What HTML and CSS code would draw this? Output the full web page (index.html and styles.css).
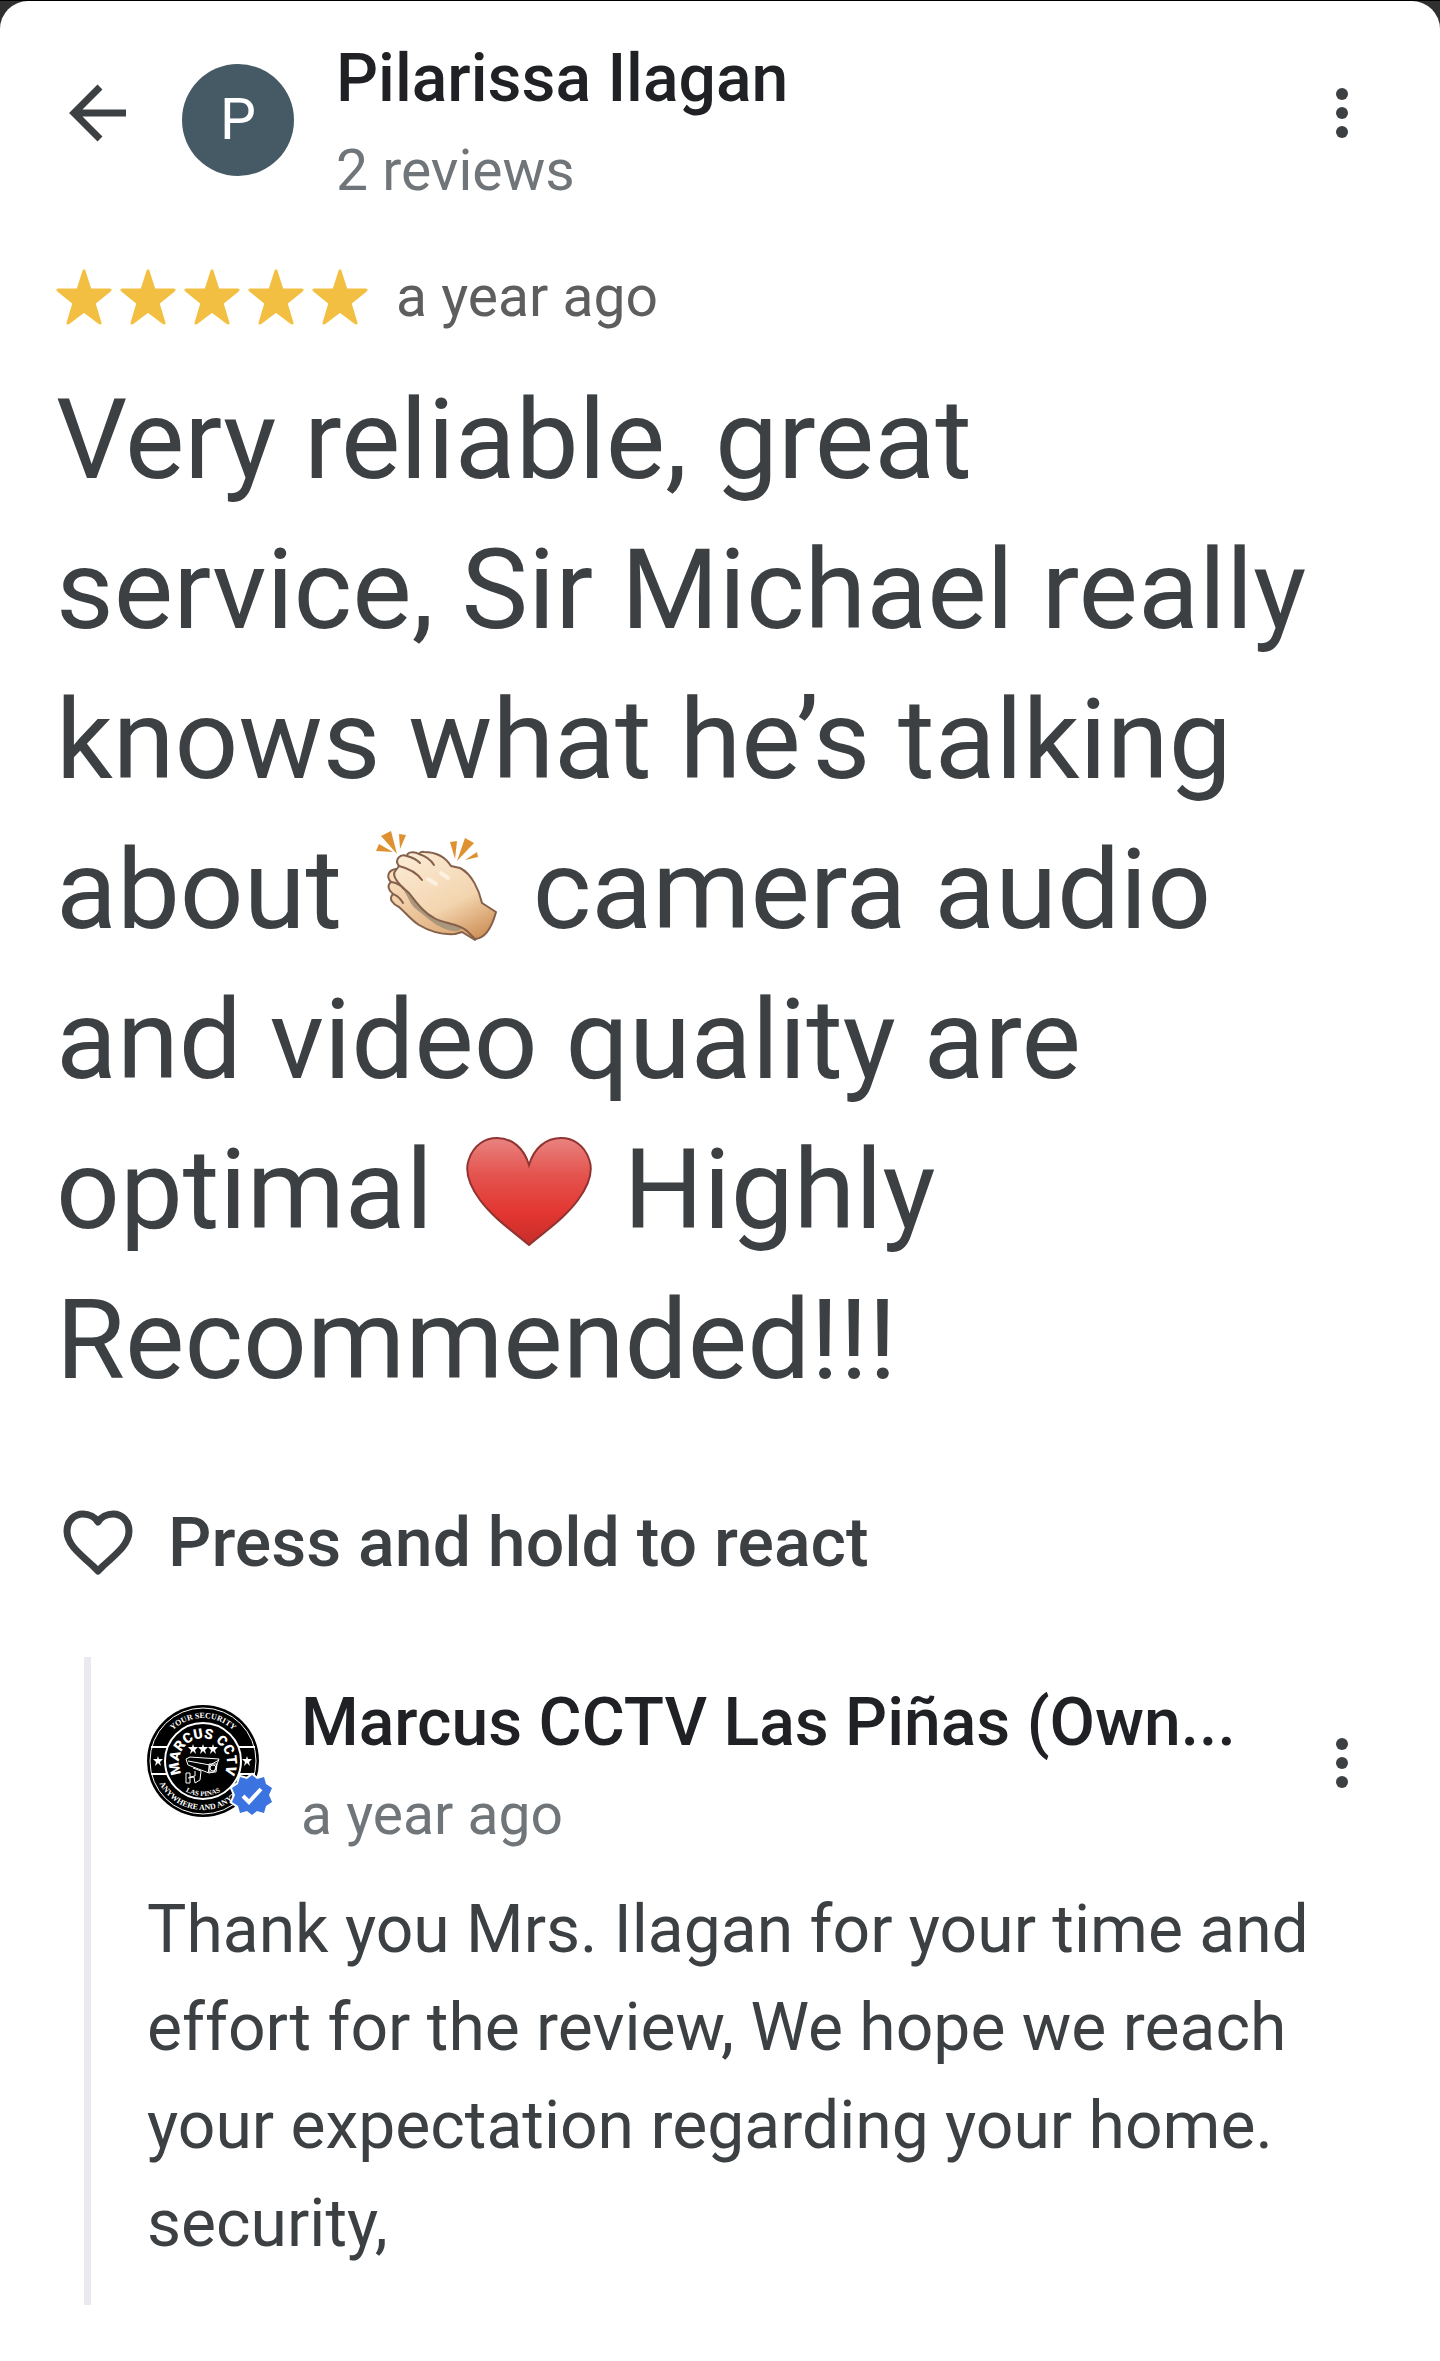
FILE: index.html
```html
<!DOCTYPE html>
<html lang="en">
<head>
    <meta charset="UTF-8">
    <meta name="viewport" content="width=device-width, initial-scale=1.0">
    <title>Review</title>
    <link rel="stylesheet" href="styles.css">
</head>
<body>
    <main class="sheet">
        <header class="header">
            <button class="icon-button back" type="button" aria-label="Back">
                <svg viewBox="0 0 72 72" width="72" height="72">
                    <path d="M64 36H13M38 10L12 36l26 26" fill="none" stroke="#3c4043" stroke-width="7"/>
                </svg>
            </button>
            <div class="avatar">P</div>
            <div class="who">
                <h1 class="name">Pilarissa Ilagan</h1>
                <div class="meta">2 reviews</div>
            </div>
            <button class="icon-button" type="button" aria-label="More options">
                <svg viewBox="0 0 72 72" width="72" height="72" fill="#3c4043">
                    <circle cx="36" cy="17" r="6"/>
                    <circle cx="36" cy="36" r="6"/>
                    <circle cx="36" cy="55" r="6"/>
                </svg>
            </button>
        </header>

        <div class="rating">
            <svg class="stars" viewBox="0 0 312 56" width="312" height="56" role="img" aria-label="5 stars">
                <defs>
                    <path id="star" d="M28 2L34 21H54L38 34L44 54L28 42L12 54L18 34L2 21H22Z" stroke-linejoin="round"/>
                </defs>
                <g fill="#f2bf42" stroke="#f2bf42" stroke-width="3">
                    <use href="#star"/>
                    <use href="#star" x="64"/>
                    <use href="#star" x="128"/>
                    <use href="#star" x="192"/>
                    <use href="#star" x="256"/>
                </g>
            </svg>
            <span class="date">a year ago</span>
        </div>

        <p class="review-text">Very reliable, great service, Sir Michael really knows what he’s talking about
            <svg class="emoji" viewBox="2 0 135 135" role="img" aria-label="clapping hands">
                <defs>
                    <linearGradient id="skin" x1="0.2" y1="0" x2="0.8" y2="1">
                        <stop offset="0" stop-color="#fbead4"/>
                        <stop offset="0.6" stop-color="#f3d5af"/>
                        <stop offset="1" stop-color="#cf925a"/>
                    </linearGradient>
                    <linearGradient id="palm" x1="0" y1="0" x2="1" y2="1">
                        <stop offset="0" stop-color="#fbe3c5"/>
                        <stop offset="1" stop-color="#d9a068"/>
                    </linearGradient>
                </defs>
                <g fill="#dd9130">
                    <path d="M13 25l10-5 6 23z"/>
                    <path d="M31 23l7 1-6 14z"/>
                    <path d="M11 33l14 8-17-1z"/>
                    <path d="M82 31l7-1-2 18z"/>
                    <path d="M97 27l9 5-17 18z"/>
                    <path d="M109 41l1 5-13 3z"/>
                </g>
                <g stroke="#85604a" stroke-width="2" stroke-linejoin="round" stroke-linecap="round">
                    <path fill="url(#palm)" d="M28 58C20 59 18 66 23 71C19 74 20 79 25 83C20 88 25 93 31 96C38 102 43 109 51 114C61 120 73 124 87 123L94 121L107 129L114 120L60 70Z"/>
                    <path fill="#a9967c" stroke="none" d="M34 77C47 82 52 99 66 106C75 111 87 111 95 117L90 120C73 121 60 107 48 98C42 94 40 84 34 77Z"/>
                    <path fill="url(#skin)" d="M28 59C21 65 35 77 41 82C49 92 56 102 66 107C76 113 91 112 99 120L107 128Q121 127 128 101L114 92C111 79 104 63 92 57L83 55C76 44 65 41 56 41C53 40 52 42 51 43C46 40 39 41 39 45C32 42 26 49 31 55Z"/>
                    <path fill="none" d="M39 45Q47 47 52 52M51 43Q61 46 66 54M31 55Q47 59 54 69M23 71Q31 72 36 78M25 83Q31 85 35 92"/>
                </g>
                <path d="M60 68l8 5M73 62l7 5" stroke="#fff8ef" stroke-width="4" stroke-linecap="round" opacity="0.7"/>
            </svg>
            camera audio and video quality are optimal
            <svg class="emoji" viewBox="7 -10 135 135" role="img" aria-label="red heart">
                <defs>
                    <linearGradient id="red" x1="0" y1="0" x2="0" y2="1">
                        <stop offset="0" stop-color="#e98380"/>
                        <stop offset="0.35" stop-color="#e4534e"/>
                        <stop offset="0.7" stop-color="#e33631"/>
                        <stop offset="1" stop-color="#c62d29"/>
                    </linearGradient>
                </defs>
                <path d="M75 124C60 111 40 98 26 79C15 64 10 51 15 38C20 24 31 17 43 17C58 17 70 27 75 44C80 27 92 17 107 17C119 17 130 24 135 38C140 51 135 64 124 79C110 98 90 111 75 124Z" fill="url(#red)" stroke="#913431" stroke-width="2"/>
            </svg>
            Highly Recommended!!!</p>

        <button class="react" type="button">
            <svg viewBox="0 0 72 66" width="72" height="66">
                <path d="M36 61L31 56C14 41 5 33 5 21C5 11 12 4 21 4C27 4 33 7 36 12C39 7 45 4 51 4C60 4 67 11 67 21C67 33 58 41 41 56Z" fill="none" stroke="#3c4043" stroke-width="7" stroke-linejoin="round"/>
            </svg>
            Press and hold to react
        </button>

        <section class="reply">
            <div class="reply-header">
                <div class="logo">
                    <svg viewBox="0 0 112 112" width="112" height="112" role="img" aria-label="Marcus CCTV logo">
                        <defs>
                            <path id="arc-top" d="M13 56a43 43 0 0 1 86 0"/>
                            <path id="arc-bottom" d="M7 56a49 49 0 0 0 98 0"/>
                            <path id="arc-name" d="M34 67A24 24 0 1 1 78 67"/>
                            <path id="arc-city" d="M21 56a35 35 0 0 0 70 0"/>
                            <path id="small-star" d="M0-5L1-2H5L2 1L3 5L0 2L-3 5L-2 1L-5-2H-1Z"/>
                        </defs>
                        <circle cx="56" cy="56" r="56" fill="#000"/>
                        <g fill="none" stroke="#fff" stroke-width="1">
                            <circle cx="56" cy="56" r="53"/>
                            <circle cx="56" cy="56" r="38" stroke-width="2"/>
                            <path d="M4 42h16M4 69h16M92 42h16M92 69h16" stroke-width="2"/>
                        </g>
                        <g fill="#fff" text-anchor="middle">
                            <text class="logo-ring"><textPath href="#arc-top" startOffset="50%">YOUR SECURITY</textPath></text>
                            <text class="logo-ring"><textPath href="#arc-bottom" startOffset="50%">ANYWHERE AND ANYTIME</textPath></text>
                            <text class="logo-name"><textPath href="#arc-name" startOffset="50%">MARCUS CCTV</textPath></text>
                            <text class="logo-city"><textPath href="#arc-city" startOffset="50%">LAS PINAS</textPath></text>
                            <use href="#small-star" x="11" y="56"/>
                            <use href="#small-star" x="100" y="56"/>
                            <use href="#small-star" x="46" y="44"/>
                            <use href="#small-star" x="56" y="44"/>
                            <use href="#small-star" x="66" y="44"/>
                        </g>
                        <g fill="none" stroke="#fff" stroke-width="1">
                            <path d="M39 54l4-2 29 2-5 13-5 1-21-8zM41 56l22 4 9-5M63 60l-2 8M62 59h8l-1 8h-7z"/>
                            <circle cx="66" cy="63" r="3"/>
                            <path d="M46 63l8 3-1 9-5 3-1-6-6 1M39 68h4v10h-4zM43 72l5-1v-5"/>
                        </g>
                    </svg>
                    <svg class="badge" viewBox="0 0 44 44" width="44" height="44" role="img" aria-label="Verified">
                        <path d="M22 2L27 6L34 4L36 11L42 15L39 22L42 29L36 33L34 40L27 38L22 42L17 38L10 40L8 33L2 29L5 22L2 15L8 11L10 4L17 6Z" fill="#3b73e1" stroke="#fff" stroke-width="4" paint-order="stroke"/>
                        <path d="M13 23l6 6 12-13" fill="none" stroke="#fff" stroke-width="4"/>
                    </svg>
                </div>
                <div class="who">
                    <h2 class="name">Marcus CCTV Las Piñas (Own...</h2>
                    <div class="meta">a year ago</div>
                </div>
                <button class="icon-button" type="button" aria-label="More options">
                    <svg viewBox="0 0 72 72" width="72" height="72" fill="#3c4043">
                        <circle cx="36" cy="17" r="6"/>
                        <circle cx="36" cy="36" r="6"/>
                        <circle cx="36" cy="55" r="6"/>
                    </svg>
                </button>
            </div>
            <p class="reply-text">Thank you Mrs. Ilagan for your time and effort for the review, We hope we reach your expectation regarding your home. security,</p>
        </section>
    </main>
</body>
</html>
```
FILE: styles.css
```css
* {
    box-sizing: border-box;
}

html {
    background-color: #303030;
}

body {
    font-family: Roboto, "Liberation Sans", sans-serif;
    color: #3c4043;
    margin: 0;
    border-top: 1px solid #000;
}

.sheet {
    min-height: calc(100vh - 1px);
    padding: 28px 56px 54px;
    background-color: #fff;
    border-radius: 28px 28px 0 0;
}

h1,
h2,
p {
    margin: 0;
}

button {
    padding: 0;
    border: none;
    background: none;
    color: inherit;
    font-family: inherit;
    cursor: pointer;
}

svg {
    display: block;
}

.header,
.reply-header {
    display: flex;
    align-items: flex-start;
}

.icon-button {
    flex: none;
    width: 72px;
    height: 72px;
    margin-top: 48px;
    margin-right: 6px;
}

.back {
    margin-right: 48px;
    margin-left: 6px;
}

.avatar {
    flex: none;
    width: 112px;
    height: 112px;
    margin-top: 35px;
    border-radius: 50%;
    background-color: #455a64;
    color: #fff;
    font-size: 57px;
    line-height: 112px;
    text-align: center;
}

.who {
    flex: 1;
    min-width: 0;
    margin-right: 60px;
    margin-left: 42px;
}

.name {
    overflow: hidden;
    color: #202124;
    font-size: 66px;
    font-weight: 500;
    line-height: 100px;
    text-overflow: ellipsis;
    white-space: nowrap;
}

.meta,
.date {
    color: #70757a;
    font-size: 57px;
    line-height: 84px;
}

.date {
    color: #5e5e5e;
}

.rating {
    display: flex;
    align-items: center;
    gap: 28px;
    margin-top: 42px;
}

.review-text {
    margin-top: 26px;
    padding-right: 60px;
    font-size: 112px;
    line-height: 150px;
}

.emoji {
    display: inline-block;
    width: 135px;
    height: 135px;
    vertical-align: -10px;
    margin: -8px 0;
}

.react {
    display: flex;
    align-items: center;
    gap: 34px;
    margin: 88px 0 0 6px;
    font-size: 68px;
    font-weight: 500;
    line-height: 80px;
}

.reply {
    margin: 74px 0 0 28px;
    padding: 16px 0 32px 56px;
    border-left: 7px solid #e8eaed;
}

.logo {
    position: relative;
    flex: none;
    margin-top: 32px;
}

.badge {
    position: absolute;
    right: -15px;
    bottom: 0;
    overflow: visible;
}

.logo-ring {
    font-family: "Liberation Serif", serif;
    font-size: 8px;
    font-weight: 700;
}

.logo-name {
    font-size: 14px;
    font-weight: 900;
}

.logo-city {
    font-family: "Liberation Serif", serif;
    font-size: 7px;
    font-weight: 700;
}

.reply-header .icon-button {
    margin-top: 54px;
}

.reply-text {
    margin-top: 24px;
    font-size: 66px;
    line-height: 98px;
}
```
